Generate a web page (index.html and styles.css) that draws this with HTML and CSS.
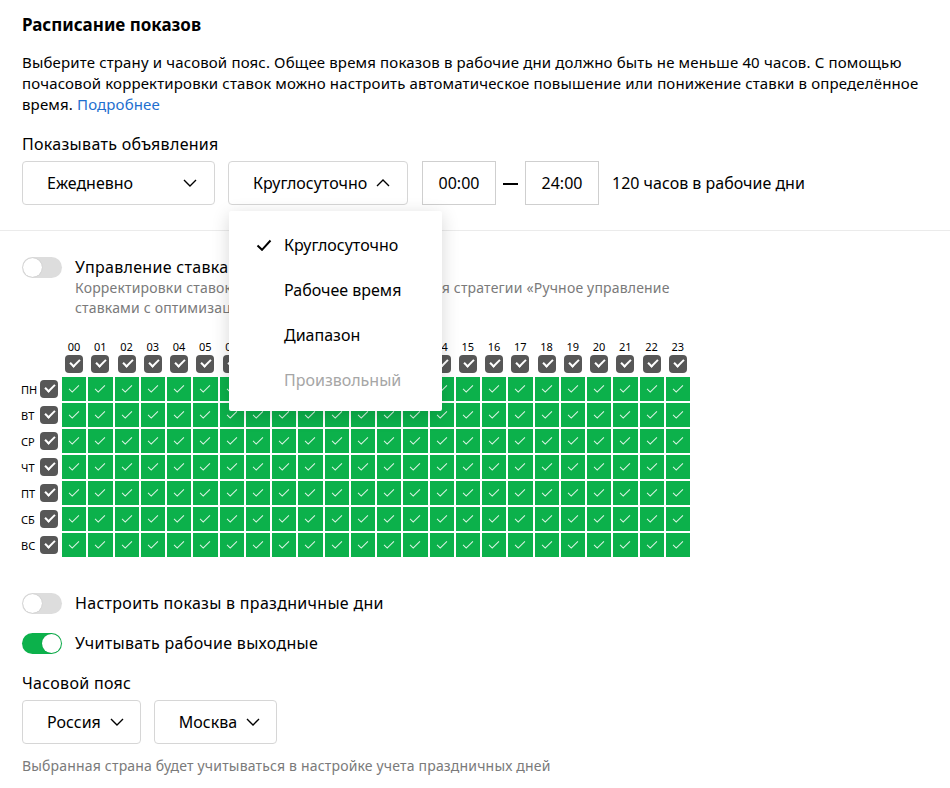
FILE: index.html
```html
<!DOCTYPE html>
<html lang="ru">
<head>
  <meta charset="utf-8">
  <title>Расписание показов</title>
  <link rel="stylesheet" href="styles.css">
</head>
<body>
  <div class="schedule">
    <div class="section">
      <h2 class="title">Расписание показов</h2>
      <p class="intro">Выберите страну и часовой пояс. Общее время показов в рабочие дни должно быть не меньше 40 часов. С помощью почасовой корректировки ставок можно настроить автоматическое повышение или понижение ставки в определённое время. <a href="#">Подробнее</a></p>

      <div class="label">Показывать объявления</div>
      <div class="controls">
        <div class="select select-days">
          <span>Ежедневно</span>
          <svg class="chevron" viewBox="0 0 14 8"><path d="M1 1l6 6 6-6"/></svg>
        </div>
        <div class="select-wrap">
          <div class="select select-mode">
            <span>Круглосуточно</span>
            <svg class="chevron" viewBox="0 0 14 8"><path d="M1 7l6-6 6 6"/></svg>
          </div>
          <div class="menu">
            <div class="menu-item is-checked">
              <svg class="tick" viewBox="0 0 16 12"><path d="M1.5 6.5l4.5 4.3 8.5-9.3"/></svg>
              Круглосуточно
            </div>
            <div class="menu-item">Рабочее время</div>
            <div class="menu-item">Диапазон</div>
            <div class="menu-item is-disabled">Произвольный</div>
          </div>
        </div>
        <div class="time">00:00</div>
        <span class="dash"></span>
        <div class="time">24:00</div>
        <span class="hours">120 часов в рабочие дни</span>
      </div>
    </div>

    <div class="divider"></div>

    <div class="section">
      <div class="toggle-row">
        <span class="toggle"></span>
        <div>
          <div class="toggle-title">Управление ставками</div>
          <div class="toggle-hint">Корректировки ставок по часам доступны только для стратегии «Ручное управление<br>ставками с оптимизацией»</div>
        </div>
      </div>

      <div class="grid" id="grid"></div>

      <div class="toggle-row holiday">
        <span class="toggle"></span>
        <div class="toggle-title">Настроить показы в праздничные дни</div>
      </div>
      <div class="toggle-row workdays">
        <span class="toggle is-on"></span>
        <div class="toggle-title">Учитывать рабочие выходные</div>
      </div>

      <div class="label tz-label">Часовой пояс</div>
      <div class="controls">
        <div class="select select-small">
          <span>Россия</span>
          <svg class="chevron" viewBox="0 0 14 8"><path d="M1 1l6 6 6-6"/></svg>
        </div>
        <div class="select select-small">
          <span>Москва</span>
          <svg class="chevron" viewBox="0 0 14 8"><path d="M1 1l6 6 6-6"/></svg>
        </div>
      </div>
      <p class="note">Выбранная страна будет учитываться в настройке учета праздничных дней</p>
    </div>
  </div>

  <script src="script.js"></script>
</body>
</html>
```

FILE: script.js
```js
var grid = document.getElementById("grid");
var days = ["ПН", "ВТ", "СР", "ЧТ", "ПТ", "СБ", "ВС"];

function el(cls, text) {
  var node = document.createElement("span");
  node.className = cls;
  if (text) node.textContent = text;
  return node;
}

// подписи часов
grid.appendChild(el("corner"));
for (var h = 0; h < 24; h++) {
  grid.appendChild(el("hour", (h < 10 ? "0" : "") + h));
}

// чекбоксы часов
grid.appendChild(el("corner"));
for (var h = 0; h < 24; h++) {
  var wrap = el("hour-check");
  wrap.appendChild(el("box"));
  grid.appendChild(wrap);
}

for (var d = 0; d < days.length; d++) {
  var head = el("day");
  head.appendChild(el("day-name", days[d]));
  head.appendChild(el("box"));
  grid.appendChild(head);
  for (var h = 0; h < 24; h++) {
    grid.appendChild(el("cell"));
  }
}
```

FILE: styles.css
```css
body {
  margin: 0;
  padding: 0;
  background: #fff;
  color: #000;
  font-family: "Noto Sans", "Liberation Sans", Arial, sans-serif;
}

.schedule {
  width: 950px;
}

.section {
  padding: 0 14px 0 22px;
}

.title {
  margin: 0;
  padding-top: 13px;
  font-size: 17px;
  line-height: 24px;
  font-weight: 700;
}

.intro {
  margin: 15px 0 0;
  font-size: 15px;
  line-height: 21px;
  letter-spacing: 0.15px;
}

.intro a {
  color: #1e6fcf;
  text-decoration: none;
}

.label {
  margin-top: 18px;
  font-size: 16px;
  line-height: 22px;
  letter-spacing: 0.3px;
}

.controls {
  display: flex;
  align-items: center;
  margin-top: 6px;
}

.select {
  box-sizing: border-box;
  height: 44px;
  display: flex;
  align-items: center;
  justify-content: space-between;
  padding: 0 17px 0 24px;
  border: 1px solid #d6d6d6;
  border-radius: 4px;
  font-size: 16px;
}

.select-days {
  width: 193px;
  margin-right: 13px;
}

.select-wrap {
  position: relative;
  margin-right: 14px;
}

.select-mode {
  width: 180px;
}

.select-small {
  gap: 9px;
  padding-right: 16px;
  margin-right: 13px;
}

.chevron {
  width: 14px;
  height: 8px;
  fill: none;
  stroke: #000;
  stroke-width: 1.4;
}

.menu {
  position: absolute;
  top: 50px;
  left: 1px;
  z-index: 10;
  width: 213px;
  box-sizing: border-box;
  padding: 12px 0 8px;
  background: #fff;
  box-shadow: 0 4px 18px rgba(0, 0, 0, 0.16);
  border-radius: 2px;
}

.menu-item {
  position: relative;
  height: 45px;
  line-height: 45px;
  padding-left: 55px;
  font-size: 16px;
}

.menu-item.is-disabled {
  color: #a6a6a6;
}

.tick {
  position: absolute;
  left: 27px;
  top: 16px;
  width: 16px;
  height: 12px;
  fill: none;
  stroke: #000;
  stroke-width: 2;
}

.time {
  box-sizing: border-box;
  width: 74px;
  height: 44px;
  line-height: 42px;
  text-align: center;
  border: 1px solid #cfcfcf;
  font-size: 16px;
}

.dash {
  width: 15px;
  height: 2px;
  background: #000;
  margin: 1px 7px 0;
}

.hours {
  margin-left: 13px;
  font-size: 16px;
}

.divider {
  height: 1px;
  background: #ebebeb;
  margin-top: 25px;
}

.toggle-row {
  display: flex;
  align-items: flex-start;
  margin-top: 25px;
}

.toggle {
  position: relative;
  flex: none;
  width: 40px;
  height: 21px;
  margin: 1px 13px 0 0;
  border-radius: 11px;
  background: #dddddd;
}

.toggle::after {
  content: "";
  position: absolute;
  top: 1px;
  left: 1px;
  width: 19px;
  height: 19px;
  border-radius: 50%;
  background: #fff;
  box-shadow: 0 0 1px rgba(0, 0, 0, 0.25);
}

.toggle.is-on {
  background: #0cb14b;
}

.toggle.is-on::after {
  left: 20px;
}

.toggle-title {
  font-size: 16px;
  line-height: 22px;
  letter-spacing: 0.3px;
}

.toggle-hint {
  font-size: 14px;
  line-height: 20px;
  letter-spacing: 0.18px;
  color: #7a7a7a;
}

.grid {
  display: grid;
  width: 668px;
  margin-top: 22px;
  grid-template-columns: 38px repeat(24, 1fr);
  grid-template-rows: 13px 20px repeat(7, 24px);
  column-gap: 2px;
  row-gap: 2px;
}

.hour {
  font-size: 11px;
  line-height: 13px;
  text-align: center;
}

.hour-check {
  display: flex;
  justify-content: center;
  align-items: flex-start;
}

.box {
  position: relative;
  display: block;
  width: 18px;
  height: 18px;
  border-radius: 4px;
  background: #575757;
}

.box::after {
  content: "";
  position: absolute;
  left: 5px;
  top: 4px;
  width: 8px;
  height: 4px;
  border-left: 2.5px solid #fff;
  border-bottom: 2.5px solid #fff;
  transform: rotate(-45deg);
}

.day {
  display: flex;
  align-items: center;
  justify-content: space-between;
  padding-right: 2px;
}

.day-name {
  font-size: 11px;
  margin-left: -1px;
}

.cell {
  position: relative;
  background: #0cb14b;
}

.cell::after {
  content: "";
  position: absolute;
  left: 50%;
  top: 50%;
  width: 9px;
  height: 4px;
  margin: -4px 0 0 -5px;
  border-left: 1.3px solid rgba(255, 255, 255, 0.85);
  border-bottom: 1.3px solid rgba(255, 255, 255, 0.85);
  transform: rotate(-45deg);
}

.holiday {
  margin-top: 35px;
}

.workdays {
  margin-top: 18px;
}

.tz-label {
  margin-top: 18px;
}

.note {
  margin: 12px 0 0;
  font-size: 14px;
  line-height: 20px;
  letter-spacing: 0.18px;
  color: #7a7a7a;
}
```
